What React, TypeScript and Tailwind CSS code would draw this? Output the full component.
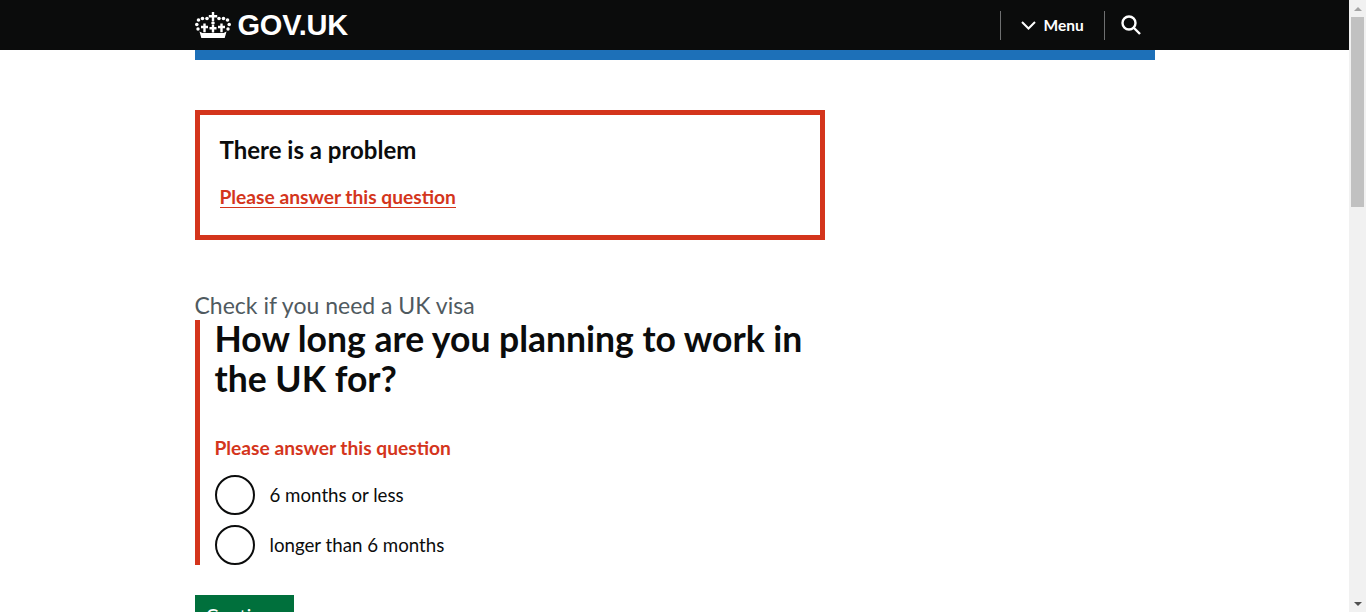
const options = ['6 months or less', 'longer than 6 months'];

function Crown() {
  return (
    <svg width="36" height="26" viewBox="0 0 36 26" fill="white" aria-hidden="true">
      <path d="M16.800 0h2.400v3h3v2.400h-3v3.600h-2.400V5.400h-3V3h3z" />
      <circle cx="18" cy="11" r="1.800" />
      <circle cx="12" cy="6.500" r="1.800" />
      <circle cx="24" cy="6.500" r="1.800" />
      <circle cx="7.500" cy="6.500" r="1.800" />
      <circle cx="28.500" cy="6.500" r="1.800" />
      <circle cx="3.500" cy="8" r="1.800" />
      <circle cx="32.500" cy="8" r="1.800" />
      <circle cx="1.800" cy="12.500" r="1.800" />
      <circle cx="34.200" cy="12.500" r="1.800" />
      <circle cx="3" cy="17" r="1.700" />
      <circle cx="33" cy="17" r="1.700" />
      <path d="M8.300 11.500h2.400v2.300h2.300v2.400h-2.300v4h-2.400v-4H6v-2.400h2.300zM16.800 13h2.400v2h2.300v2.400h-2.300v3h-2.400v-3h-2.300V15h2.300zM25.300 11.500h2.400v2.300H30v2.400h-2.300v4h-2.400v-4H23v-2.400h2.300z" />
      <path d="M4.500 19.500l3 1.500h21l3-1.500-1.800 6.500H6.300z" />
    </svg>
  );
}

function Header() {
  return (
    <header className="h-[50px] bg-[#0b0c0c] text-white">
      <div className="mx-auto flex h-full w-[960px] items-center justify-between">
        <div className="flex items-center gap-[7px]">
          <Crown />
          <span className="text-[29px] font-bold leading-none tracking-[-0.2px] font-['Liberation_Sans',sans-serif]">GOV.UK</span>
        </div>
        <div className="flex h-full items-center">
          <div className="flex h-[29px] w-[105px] items-center gap-[8px] border-x border-[#6f7071] pl-[20px]">
            <svg width="15" height="9" viewBox="0 0 15 9" fill="none" stroke="white" strokeWidth="2" aria-hidden="true">
              <path d="M1 1l6.500 6.500L14 1" />
            </svg>
            <span className="pt-px text-[15.500px] font-bold">Menu</span>
          </div>
          <div className="flex h-full w-[50px] items-center justify-center pl-[2px]">
            <svg width="20" height="20" viewBox="0 0 20 20" fill="none" stroke="white" strokeWidth="2.400" aria-hidden="true">
              <circle cx="8" cy="8" r="6.500" />
              <path d="M12.500 12.500l6.500 6.500" />
            </svg>
          </div>
        </div>
      </div>
    </header>
  );
}

function Scrollbar() {
  return (
    <aside className="flex h-[612px] w-[17px] shrink-0 flex-col items-center bg-[#f1f1f1]">
      <div className="flex h-[17px] items-center justify-center">
        <div className="h-0 w-0 border-x-[4px] border-b-[4px] border-x-transparent border-b-[#a3a3a3]" />
      </div>
      <div className="h-[190px] w-[13px] bg-[#c1c1c1]" />
      <div className="flex-1" />
      <div className="flex h-[17px] items-center justify-center">
        <div className="h-0 w-0 border-x-[4px] border-t-[4px] border-x-transparent border-t-[#505050]" />
      </div>
    </aside>
  );
}

export default function App() {
  return (
    <div className="flex h-[612px] overflow-hidden bg-white font-['Lato',sans-serif] text-[#0b0c0c]">
      <div className="min-w-0 flex-1">
        <Header />
        <main className="mx-auto w-[960px]">
          <div className="h-[10px] bg-[#1d70b8]" />

          <section className="mt-[50px] h-[130px] w-[630px] border-[5px] border-[#d4351c] px-[20px] pt-[20px]">
            <h2 className="text-[24px] font-bold leading-[30px]">There is a problem</h2>
            <a href="#answer" className="mt-[21px] block w-fit border-b border-[#d4351c] text-[19.200px] font-bold leading-[21px] text-[#d4351c]">
              Please answer this question
            </a>
          </section>

          <p className="mt-[50px] text-[23px] leading-[30px] text-[#505a5f]">Check if you need a UK visa</p>

          <div className="flex h-[245px] w-[630px] flex-col border-l-[5px] border-[#d4351c] pl-[15px]">
            <h1 className="-mt-px text-[35.500px] font-bold leading-[40px]">How long are you planning to work in the UK for?</h1>
            <p id="answer" className="mt-[36px] text-[19.200px] font-bold leading-[25px] text-[#d4351c]">Please answer this question</p>
            <div className="mt-[15px] flex flex-col gap-[10px]">
              {options.map((opt) => (
                <label key={opt} className="flex items-center gap-[15px]">
                  <span className="h-[40px] w-[40px] rounded-full border-2 border-[#0b0c0c] bg-white" />
                  <span className="text-[18.700px] leading-[25px]">{opt}</span>
                </label>
              ))}
            </div>
          </div>

          <button className="mt-[30px] block h-[40px] w-[99px] bg-[#00703c] text-[19px] leading-[25px] text-white">Continue</button>
        </main>
      </div>
      <Scrollbar />
    </div>
  );
}
